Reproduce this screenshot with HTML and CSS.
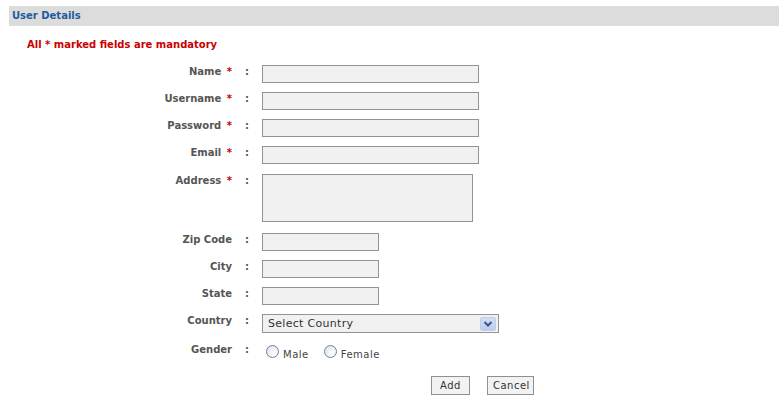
FILE: index.html
```html
<!DOCTYPE html>
<html>
<head>
<meta charset="utf-8">
<title>User Details</title>
<link rel="stylesheet" href="styles.css">
</head>
<body>
<div class="page">
  <div class="header">User Details</div>
  <p class="note">All * marked fields are mandatory</p>
  <form class="form">
    <label class="lbl">Name <span class="req">*</span></label><span class="colon">:</span>
    <div class="field"><input class="txt wide" type="text"></div>

    <label class="lbl">Username <span class="req">*</span></label><span class="colon">:</span>
    <div class="field"><input class="txt wide" type="text"></div>

    <label class="lbl">Password <span class="req">*</span></label><span class="colon">:</span>
    <div class="field"><input class="txt wide" type="password"></div>

    <label class="lbl">Email <span class="req">*</span></label><span class="colon">:</span>
    <div class="field"><input class="txt wide" type="text"></div>

    <label class="lbl">Address <span class="req">*</span></label><span class="colon">:</span>
    <div class="field"><textarea class="area"></textarea></div>

    <label class="lbl">Zip Code</label><span class="colon">:</span>
    <div class="field"><input class="txt short" type="text"></div>

    <label class="lbl">City</label><span class="colon">:</span>
    <div class="field"><input class="txt short" type="text"></div>

    <label class="lbl">State</label><span class="colon">:</span>
    <div class="field"><input class="txt short" type="text"></div>

    <label class="lbl">Country</label><span class="colon">:</span>
    <div class="field">
      <div class="selectwrap">
        <select class="sel"><option>Select Country</option></select>
        <span class="arrow"><svg width="16" height="14" viewBox="0 0 16 14"><polyline points="4.5,5 8,8.5 11.5,5" fill="none" stroke="#3c5488" stroke-width="2"/></svg></span>
      </div>
    </div>

    <label class="lbl">Gender</label><span class="colon">:</span>
    <div class="field radios">
      <label class="opt"><input type="radio" name="g" class="radio"><span>Male</span></label>
      <label class="opt"><input type="radio" name="g" class="radio"><span>Female</span></label>
    </div>

    <div class="buttons">
      <button type="button" class="btn add">Add</button>
      <button type="button" class="btn cancel">Cancel</button>
    </div>
  </form>
</div>
</body>
</html>
```

FILE: styles.css
```css
html, body {
  margin: 0;
  padding: 0;
  background: #ffffff;
}

body {
  font-family: "DejaVu Sans", Verdana, sans-serif;
  font-size: 10px;
  color: #555555;
}

.page {
  padding-top: 6px;
  padding-left: 9px;
}

.header {
  height: 20px;
  line-height: 20px;
  background: #dcdcdc;
  color: #1d5d9b;
  font-weight: bold;
  font-size: 10px;
  padding-left: 3px;
}

.note {
  margin: 0;
  padding: 12px 0 0 18px;
  height: 27px;
  box-sizing: border-box;
  line-height: 14px;
  color: #cc0000;
  font-weight: bold;
  font-size: 10px;
}

.form {
  margin-top: 12px;
  display: grid;
  grid-template-columns: 223px 30px 1fr;
  grid-template-rows: 27px 27px 27px 28px 59px 27px 27px 27px 29px 33px auto;
}

.lbl {
  text-align: right;
  font-weight: bold;
  line-height: 14px;
  color: #555555;
  white-space: nowrap;
}

.req {
  color: #cc0000;
  margin-left: 2px;
}

.colon {
  text-align: center;
  font-weight: bold;
  line-height: 14px;
  color: #555555;
}

.field {
  display: flex;
  align-items: flex-start;
}

.txt, .area, .sel {
  box-sizing: border-box;
  border: 1px solid #939393;
  background: #f1f1f1;
  margin: 0;
  padding: 1px 4px;
  font-family: "DejaVu Sans", Verdana, sans-serif;
  font-size: 11px;
  color: #333333;
  outline: none;
}

.txt {
  height: 18px;
}

.wide {
  width: 217px;
}

.short {
  width: 117px;
}

.area {
  width: 211px;
  height: 48px;
  resize: none;
}

.selectwrap {
  position: relative;
  width: 237px;
  height: 19px;
}

.sel {
  -webkit-appearance: none;
  appearance: none;
  width: 237px;
  height: 19px;
  padding: 0 0 0 5px;
  line-height: 17px;
  border-radius: 0;
  letter-spacing: 0.3px;
}

.arrow {
  position: absolute;
  right: 3px;
  top: 3px;
  width: 16px;
  height: 14px;
  box-sizing: border-box;
  background: linear-gradient(#d3def4, #bccdee);
  border: 1px solid #bfcdeb;
  border-radius: 2px;
  display: flex;
  pointer-events: none;
}

.arrow svg {
  display: block;
  margin: -1px;
}

.radios {
  padding-top: 2px;
  gap: 15px;
}

.opt {
  display: flex;
  align-items: flex-start;
  gap: 4px;
  font-size: 10px;
  color: #444444;
  letter-spacing: 0.5px;
}

.opt span {
  padding-top: 4px;
  line-height: 12px;
}

.radio {
  -webkit-appearance: none;
  appearance: none;
  width: 13px;
  height: 13px;
  margin: 0 0 0 4px;
  border: 1px solid #6f829a;
  border-radius: 50%;
  background: radial-gradient(circle at 65% 65%, #ffffff 0, #f3f5f8 35%, #d4dbe6 100%);
  box-sizing: border-box;
  flex: none;
}

.opt + .opt .radio {
  margin-left: 0;
}

.buttons {
  grid-column: 3;
  display: flex;
  gap: 17px;
  padding-left: 169px;
}

.btn {
  box-sizing: border-box;
  height: 19px;
  border: 1px solid #8f8f8f;
  background: #f2f2f2;
  font-family: "DejaVu Sans", Verdana, sans-serif;
  font-size: 10px;
  color: #333333;
  letter-spacing: 0.5px;
  padding: 0 5px;
  margin: 0;
  border-radius: 0;
}

.add {
  width: 39px;
}

.cancel {
  width: 47px;
}
```
